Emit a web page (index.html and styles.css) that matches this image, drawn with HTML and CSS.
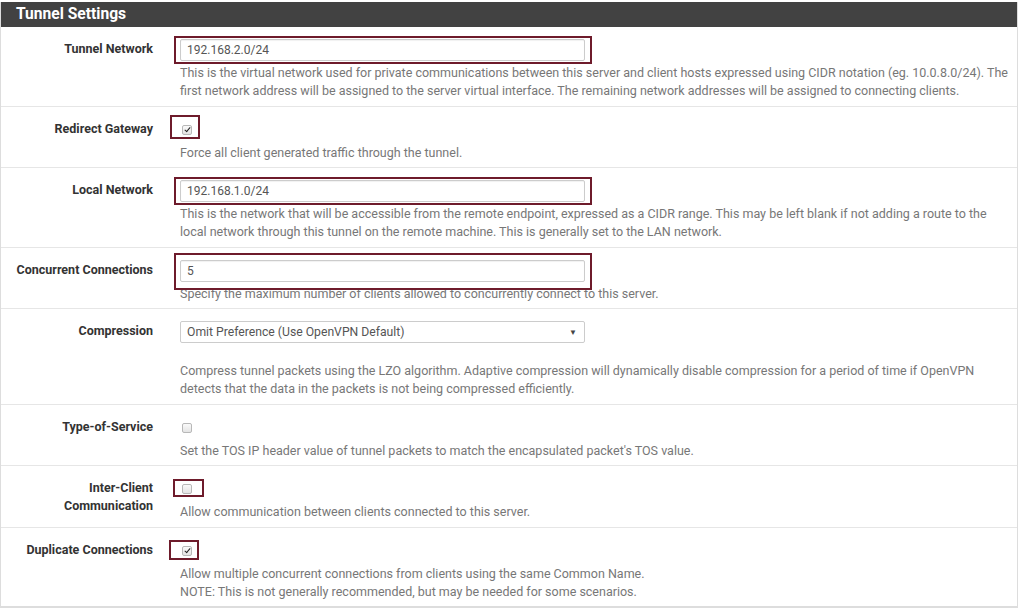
FILE: index.html
```html
<!DOCTYPE html>
<html>
<head>
<meta charset="utf-8">
<link rel="stylesheet" href="styles.css">
</head>
<body>
<div class="panel">
  <div class="panel-heading">Tunnel Settings</div>

  <div class="row">
    <div class="label">Tunnel Network</div>
    <div class="content">
      <div class="control">
        <input class="text-input" type="text" value="192.168.2.0/24">
        <span class="mark mark-input"></span>
      </div>
      <div class="help">This is the virtual network used for private communications between this server and client hosts expressed using CIDR notation (eg. 10.0.8.0/24). The first network address will be assigned to the server virtual interface. The remaining network addresses will be assigned to connecting clients.</div>
    </div>
  </div>

  <div class="row">
    <div class="label">Redirect Gateway</div>
    <div class="content">
      <div class="control cb-line">
        <span class="cb checked"></span>
        <span class="mark mark-cb"></span>
      </div>
      <div class="help">Force all client generated traffic through the tunnel.</div>
    </div>
  </div>

  <div class="row">
    <div class="label">Local Network</div>
    <div class="content">
      <div class="control">
        <input class="text-input" type="text" value="192.168.1.0/24">
        <span class="mark mark-input"></span>
      </div>
      <div class="help">This is the network that will be accessible from the remote endpoint, expressed as a CIDR range. This may be left blank if not adding a route to the local network through this tunnel on the remote machine. This is generally set to the LAN network.</div>
    </div>
  </div>

  <div class="row">
    <div class="label">Concurrent Connections</div>
    <div class="content">
      <div class="control">
        <input class="text-input" type="text" value="5">
        <span class="mark mark-tall"></span>
      </div>
      <div class="help">Specify the maximum number of clients allowed to concurrently connect to this server.</div>
    </div>
  </div>

  <div class="row">
    <div class="label">Compression</div>
    <div class="content">
      <div class="control">
        <div class="select"><span>Omit Preference (Use OpenVPN Default)</span><span class="caret">&#9660;</span></div>
      </div>
      <div class="help spaced">Compress tunnel packets using the LZO algorithm. Adaptive compression will dynamically disable compression for a period of time if OpenVPN detects that the data in the packets is not being compressed efficiently.</div>
    </div>
  </div>

  <div class="row">
    <div class="label">Type-of-Service</div>
    <div class="content">
      <div class="control cb-line">
        <span class="cb"></span>
      </div>
      <div class="help">Set the TOS IP header value of tunnel packets to match the encapsulated packet's TOS value.</div>
    </div>
  </div>

  <div class="row">
    <div class="label">Inter-Client<br>Communication</div>
    <div class="content">
      <div class="control cb-line">
        <span class="cb"></span>
        <span class="mark mark-cb2"></span>
      </div>
      <div class="help">Allow communication between clients connected to this server.</div>
    </div>
  </div>

  <div class="row last">
    <div class="label">Duplicate Connections</div>
    <div class="content">
      <div class="control cb-line">
        <span class="cb checked"></span>
        <span class="mark mark-cb3"></span>
      </div>
      <div class="help">Allow multiple concurrent connections from clients using the same Common Name.<br>NOTE: This is not generally recommended, but may be needed for some scenarios.</div>
    </div>
  </div>
</div>
</body>
</html>
```
FILE: styles.css
```css
html, body {
  margin: 0;
  padding: 0;
  background: #ffffff;
}

body {
  font-family: Roboto, "Liberation Sans", Arial, sans-serif;
  font-size: 12px;
  color: #333333;
}

.panel {
  width: 1016px;
  margin-top: 2px;
  border: 1px solid #dddddd;
  border-top: none;
  background: #ffffff;
}

.panel-heading {
  height: 25px;
  line-height: 25px;
  background: #424242;
  color: #ffffff;
  font-weight: 700;
  font-size: 15.6px;
  padding-left: 15px;
}

.row {
  display: flex;
  border-bottom: 1px solid #e6e6e6;
  padding: 12px 0 5.5px 0;
}

.row.last {
  border-bottom: 1px solid #dddddd;
}

.label {
  width: 152px;
  flex: none;
  text-align: right;
  font-weight: 700;
  font-size: 12.5px;
  color: #333333;
  line-height: 18px;
  padding-top: 1px;
}

.content {
  flex: 1;
  padding-left: 27px;
  padding-right: 5px;
}

.control {
  position: relative;
  height: 22px;
  display: flex;
  align-items: center;
}

.text-input {
  box-sizing: border-box;
  width: 405px;
  height: 22px;
  border: 1px solid #cccccc;
  border-radius: 2px;
  box-shadow: inset 0 1px 1px rgba(0, 0, 0, 0.06);
  font-family: Roboto, "Liberation Sans", Arial, sans-serif;
  font-size: 12px;
  color: #555555;
  padding: 0 6px;
  margin: 0;
  background: #ffffff;
}

.select {
  box-sizing: border-box;
  width: 405px;
  height: 22px;
  border: 1px solid #cccccc;
  border-radius: 2px;
  display: flex;
  align-items: center;
  justify-content: space-between;
  padding: 0 7px 0 6px;
  color: #555555;
  font-size: 12.2px;
}

.caret {
  font-size: 8px;
  color: #444444;
}

.cb {
  box-sizing: border-box;
  width: 10px;
  height: 10px;
  margin-left: 2px;
  border: 1px solid #b8b8b8;
  border-radius: 2px;
  background: linear-gradient(#fafafa, #e4e4e4);
  position: relative;
}

.cb.checked::after {
  content: "";
  position: absolute;
  left: 2.5px;
  top: 0.5px;
  width: 2px;
  height: 5px;
  border: solid #222222;
  border-width: 0 1.6px 1.6px 0;
  transform: rotate(40deg);
}

.help {
  margin-top: 3px;
  line-height: 18px;
  font-size: 12.5px;
  color: #777777;
}

.help.spaced {
  margin-top: 19px;
}

.mark {
  position: absolute;
  border: 2px solid #6e1b2b;
  pointer-events: none;
}

.mark-input {
  left: -6px;
  top: -3px;
  width: 414px;
  height: 24px;
}

.mark-tall {
  left: -6px;
  top: -7px;
  width: 414px;
  height: 33px;
}

.mark-cb {
  left: -10px;
  top: -4px;
  width: 26px;
  height: 20px;
}

.mark-cb2 {
  left: -7px;
  top: 1px;
  width: 27px;
  height: 14px;
}

.mark-cb3 {
  left: -11px;
  top: 0px;
  width: 26px;
  height: 16px;
}
```
